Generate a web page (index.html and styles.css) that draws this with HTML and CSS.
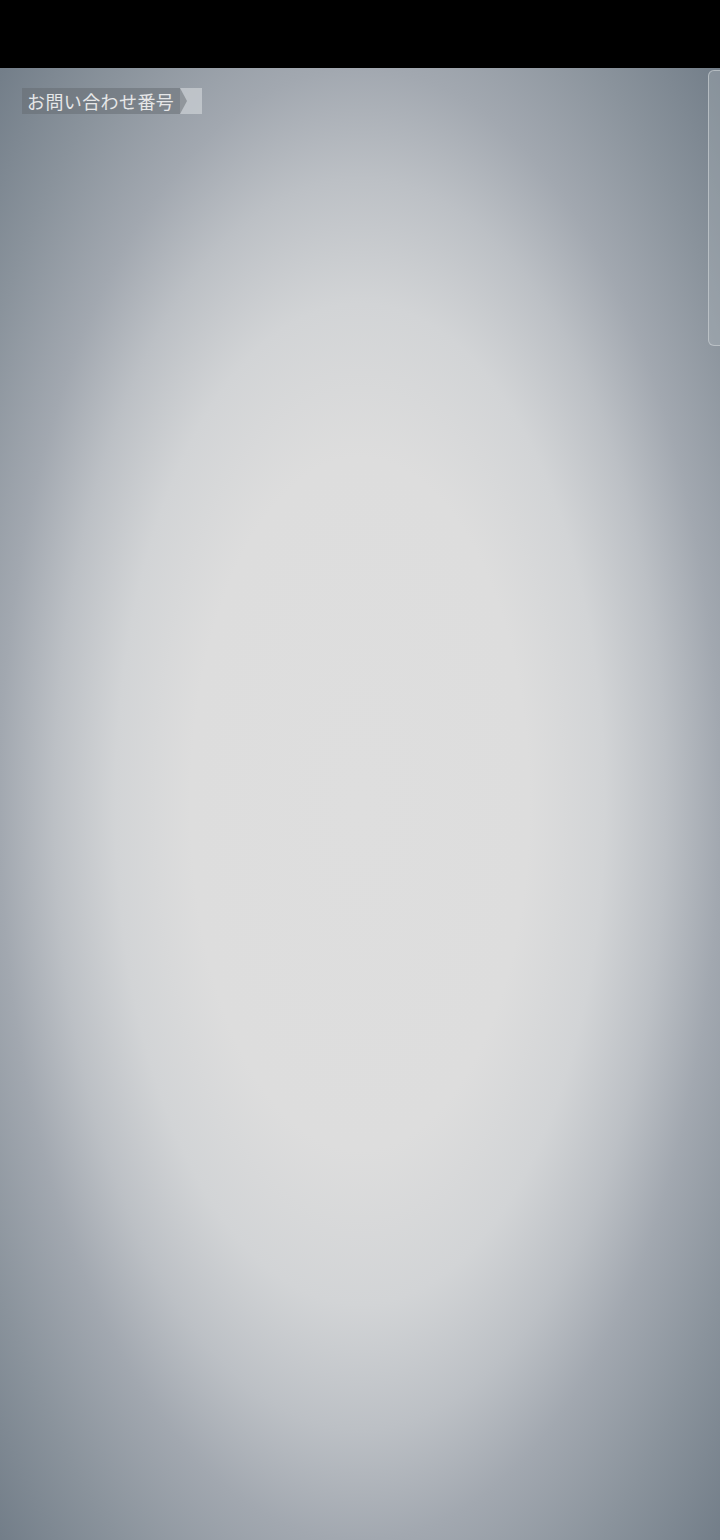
FILE: index.html
```html
<!DOCTYPE html>
<html lang="ja">
<head>
<meta charset="utf-8">
<title>お問い合わせ番号</title>
<link rel="stylesheet" href="styles.css">
</head>
<body>
<div class="statusbar"></div>
<main class="screen">
  <div class="label-row">
    <div class="label">
      <span class="label-text">お問い合わせ番号</span>
      <span class="label-arrow"></span>
    </div>
    <span class="label-end"></span>
  </div>
  <div class="side-tab"></div>
</main>
</body>
</html>
```
FILE: styles.css
```css
html, body {
  margin: 0;
  padding: 0;
  height: 100%;
  background: #000;
}
body {
  display: flex;
  flex-direction: column;
  font-family: "Noto Sans CJK JP", "Noto Sans", sans-serif;
}
.statusbar {
  height: 68px;
  flex: none;
  background: #000;
}
.screen {
  position: relative;
  flex: 1;
  padding: 20px 0 0 22px;
  background: radial-gradient(closest-side ellipse at 50% 50%,
    #dedede 0%,
    #dddddd 47%,
    #d2d4d6 68%,
    #bcc0c5 85%,
    #a2a8b0 100%,
    #8a939c 120%,
    #737e89 141%);
}
.label-row {
  display: flex;
  align-items: stretch;
  height: 26px;
}
.label {
  position: relative;
  display: flex;
  align-items: center;
  background: rgba(100, 105, 112, 0.5);
  padding: 0 4px 0 5px;
  width: 149px;
}
.label-text {
  color: #e6e7e8;
  font-size: 18px;
  line-height: 26px;
  letter-spacing: 0.4px;
  white-space: nowrap;
}
.label-arrow {
  position: absolute;
  right: -7px;
  top: 0;
  width: 0;
  height: 0;
  border-top: 13px solid transparent;
  border-bottom: 13px solid transparent;
  border-left: 7px solid rgba(100, 105, 112, 0.5);
}
.label-end {
  width: 22px;
  background: rgba(205, 209, 213, 0.7);
}
.side-tab {
  position: absolute;
  right: 0;
  top: 2px;
  width: 12px;
  height: 276px;
  box-sizing: border-box;
  background: rgba(175, 182, 190, 0.35);
  border: 1px solid rgba(200, 205, 210, 0.7);
  border-right: none;
  border-radius: 6px 0 0 6px;
}
```
